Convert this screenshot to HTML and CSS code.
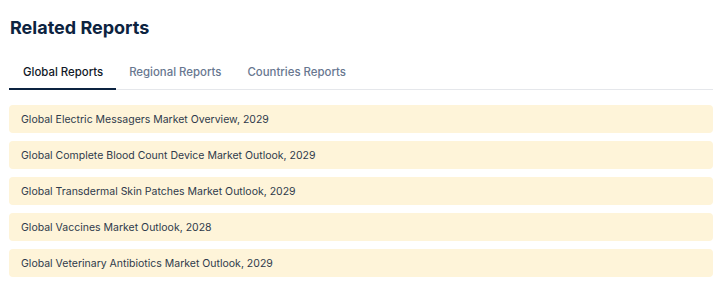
FILE: index.html
```html
<!DOCTYPE html>
<html lang="en">
<head>
  <meta charset="UTF-8" />
  <title>Related Reports</title>
  <link rel="stylesheet" href="styles.css">
</head>
<body>
  <section class="related">
    <h2>Related Reports</h2>

    <nav class="tabs">
      <a class="tab active" href="#">Global Reports</a>
      <a class="tab" href="#">Regional Reports</a>
      <a class="tab" href="#">Countries Reports</a>
    </nav>

    <ul class="report-list">
      <li><a href="#">Global Electric Messagers Market Overview, 2029</a></li>
      <li><a href="#">Global Complete Blood Count Device Market Outlook, 2029</a></li>
      <li><a href="#">Global Transdermal Skin Patches Market Outlook, 2029</a></li>
      <li><a href="#">Global Vaccines Market Outlook, 2028</a></li>
      <li><a href="#">Global Veterinary Antibiotics Market Outlook, 2029</a></li>
    </ul>
  </section>
</body>
</html>
```

FILE: styles.css
```css
* {
  box-sizing: border-box;
  margin: 0;
  padding: 0;
}

body {
  background: #ffffff;
  font-family: 'Inter', sans-serif;
  color: #1f2937;
}

.related {
  width: 704px;
  margin-left: 9px;
  padding-top: 17px;
}

h2 {
  font-size: 18px;
  font-weight: 700;
  color: #0c2340;
  line-height: 22px;
  margin-left: 1px;
}

.tabs {
  display: flex;
  margin-top: 19px;
  border-bottom: 1px solid #e5e7eb;
}

.tab {
  padding: 6px 13px 8px;
  font-size: 11.4px;
  font-weight: 500;
  line-height: 16px;
  color: #687790;
  text-decoration: none;
  border-bottom: 2px solid transparent;
  margin-bottom: -1px;
}

.tab:first-child {
  padding-left: 14px;
}

.tab.active {
  color: #111827;
  border-bottom-color: #0c2340;
}

.report-list {
  list-style: none;
  display: flex;
  flex-direction: column;
  gap: 8px;
  margin-top: 15px;
}

.report-list li {
  background: #fef4d9;
  border-radius: 4px;
  height: 28px;
  display: flex;
  align-items: center;
  padding: 0 12px;
}

.report-list a {
  font-size: 10.5px;
  color: #2e3a4b;
  text-decoration: none;
}
```
